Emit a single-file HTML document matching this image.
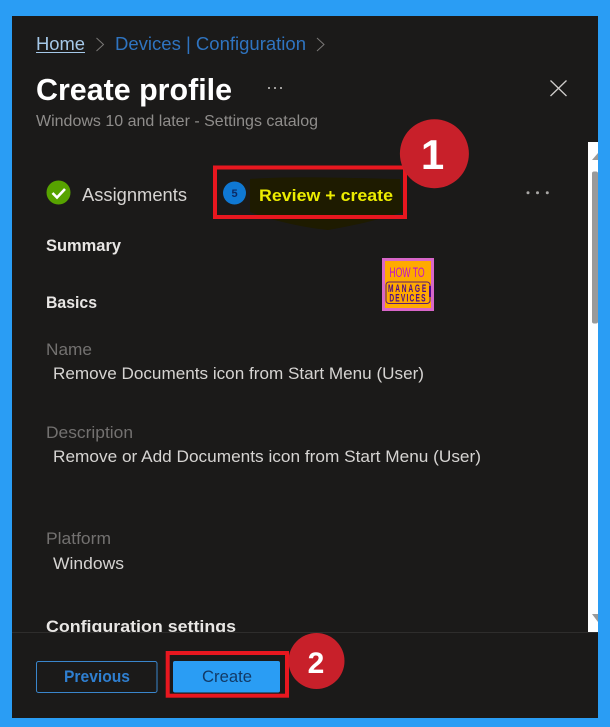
<!DOCTYPE html>
<html><head><meta charset="utf-8"><style>
html,body{margin:0;padding:0;background:#2a9df4;width:610px;height:727px;overflow:hidden}
svg{display:block}
text{font-family:"Liberation Sans",sans-serif}
</style></head><body>
<svg width="610" height="727" viewBox="0 0 610 727" xmlns="http://www.w3.org/2000/svg">
<defs><clipPath id="c"><rect x="12" y="16" width="586" height="616"/></clipPath></defs>
<rect width="610" height="727" fill="#2a9df4"/>
<rect x="12" y="16" width="586" height="702" fill="#1b1a19"/>
<!-- breadcrumb -->
<text x="36" y="50" font-size="18" fill="#a5c8e8" textLength="49" lengthAdjust="spacingAndGlyphs">Home</text>
<rect x="36" y="52" width="49" height="1" fill="#a5c8e8"/>
<path d="M96.500 38l7 6.500-7 6.500" fill="none" stroke="#7a7876" stroke-width="1"/>
<text x="115" y="50" font-size="18" fill="#2f74c0" textLength="191" lengthAdjust="spacingAndGlyphs">Devices | Configuration</text>
<path d="M317 38l7 6.500-7 6.500" fill="none" stroke="#7a7876" stroke-width="1"/>
<!-- title -->
<text x="36" y="100" font-size="31" font-weight="700" fill="#fff" textLength="196" lengthAdjust="spacingAndGlyphs">Create profile</text>
<g fill="#a09e9c"><rect x="268" y="87" width="2" height="2"/><rect x="274" y="87" width="2" height="2"/><rect x="280" y="87" width="2" height="2"/></g>
<text x="36" y="126" font-size="16" fill="#8f8d8b" textLength="282" lengthAdjust="spacingAndGlyphs">Windows 10 and later - Settings catalog</text>
<path d="M550.500 80.500l16 15.500M566.500 80.500l-16 15.500" stroke="#cfcdcb" stroke-width="1.300" fill="none"/>
<!-- scrollbar -->
<rect x="588" y="142" width="10" height="491" fill="#fff"/>
<path d="M592 160l6-7v7z" fill="#9a9a9a"/>
<rect x="592" y="171.500" width="6" height="152" rx="2" fill="#9a9a9a"/>
<path d="M592 614h6v8z" fill="#9a9a9a"/>
<!-- yellow scribble -->
<path d="M250 179c40-3 100-1 150 0l3 33c-20 6-40 12-75 18-30-3-60-11-78-18z" fill="#1e1b00"/>
<!-- tabs -->
<circle cx="58.500" cy="192.500" r="12" fill="#57a300"/>
<path d="M52.500 193l4.500 4.500 8-8.500" fill="none" stroke="#fff" stroke-width="2.600"/>
<text x="82" y="201" font-size="18" fill="#d6d4d2" textLength="105" lengthAdjust="spacingAndGlyphs">Assignments</text>
<circle cx="234.500" cy="193" r="11.500" fill="#0f78d4"/>
<text x="234.500" y="197" font-size="11" font-weight="700" fill="#0b2a66" text-anchor="middle">5</text>
<text x="259" y="201" font-size="17" font-weight="700" fill="#ecec00" textLength="134" lengthAdjust="spacingAndGlyphs">Review + create</text>
<rect x="215" y="167.500" width="190" height="49.500" fill="none" stroke="#e8171f" stroke-width="4"/>
<g fill="#a8a6a4"><circle cx="528" cy="192.800" r="1.500"/><circle cx="537.500" cy="192.800" r="1.500"/><circle cx="547.300" cy="192.800" r="1.500"/></g>
<circle cx="434.400" cy="153.700" r="34.500" fill="#c8202a"/>
<text x="432.500" y="169" font-size="42" font-weight="700" fill="#fff" text-anchor="middle">1</text>
<!-- content -->
<g clip-path="url(#c)">
<text x="46" y="251" font-size="17" font-weight="700" fill="#e8e6e4" textLength="75" lengthAdjust="spacingAndGlyphs">Summary</text>
<text x="46" y="308" font-size="17" font-weight="700" fill="#e8e6e4" textLength="51" lengthAdjust="spacingAndGlyphs">Basics</text>
<text x="46" y="355" font-size="17" fill="#737170" textLength="46" lengthAdjust="spacingAndGlyphs">Name</text>
<text x="53" y="379" font-size="17" fill="#d6d4d2" textLength="371" lengthAdjust="spacingAndGlyphs">Remove Documents icon from Start Menu (User)</text>
<text x="46" y="438" font-size="17" fill="#737170" textLength="87" lengthAdjust="spacingAndGlyphs">Description</text>
<text x="53" y="462" font-size="17" fill="#d6d4d2" textLength="428" lengthAdjust="spacingAndGlyphs">Remove or Add Documents icon from Start Menu (User)</text>
<text x="46" y="544" font-size="17" fill="#737170" textLength="65" lengthAdjust="spacingAndGlyphs">Platform</text>
<text x="53" y="569" font-size="17" fill="#d6d4d2" textLength="71" lengthAdjust="spacingAndGlyphs">Windows</text>
<text x="46" y="632" font-size="17" font-weight="700" fill="#e8e6e4" textLength="190" lengthAdjust="spacingAndGlyphs">Configuration settings</text>
</g>
<rect x="12" y="632" width="586" height="1" fill="#2e2d2c"/>
<!-- logo -->
<rect x="382" y="258" width="52" height="53" fill="#d866c8"/>
<rect x="385" y="261" width="46" height="47" fill="#ffaa00"/>
<text transform="translate(407 277) scale(.62 1)" x="0" y="0" font-size="14" fill="#c010d0" text-anchor="middle">HOW TO</text>
<rect x="386" y="282" width="44" height="21.500" rx="3" fill="none" stroke="#5a1a70" stroke-width="1"/>
<rect x="429" y="286" width="2" height="11" fill="#4b0a8c"/>
<text transform="translate(408 292) scale(.6 1)" x="0" y="0" font-size="11" font-weight="700" fill="#4b0a8c" text-anchor="middle" letter-spacing="3">MANAGE</text>
<text transform="translate(408 301.500) scale(.6 1)" x="0" y="0" font-size="11" font-weight="700" fill="#4b0a8c" text-anchor="middle" letter-spacing="2">DEVICES</text>
<!-- footer -->
<rect x="36.500" y="661.500" width="120.500" height="31" rx="2" fill="none" stroke="#3a86cc" stroke-width="1"/>
<text x="64" y="682" font-size="17" font-weight="700" fill="#2f7fd0" textLength="66" lengthAdjust="spacingAndGlyphs">Previous</text>
<rect x="173" y="661" width="107" height="31.500" rx="2" fill="#2a9df4"/>
<text x="202" y="682" font-size="17" fill="#123a66" textLength="50" lengthAdjust="spacingAndGlyphs">Create</text>
<rect x="167.700" y="653" width="119.300" height="42.700" fill="none" stroke="#e8171f" stroke-width="4"/>
<circle cx="316.500" cy="661" r="28" fill="#c8202a"/>
<text x="316" y="673" font-size="30" font-weight="700" fill="#fff" text-anchor="middle">2</text>
</svg>
</body></html>
